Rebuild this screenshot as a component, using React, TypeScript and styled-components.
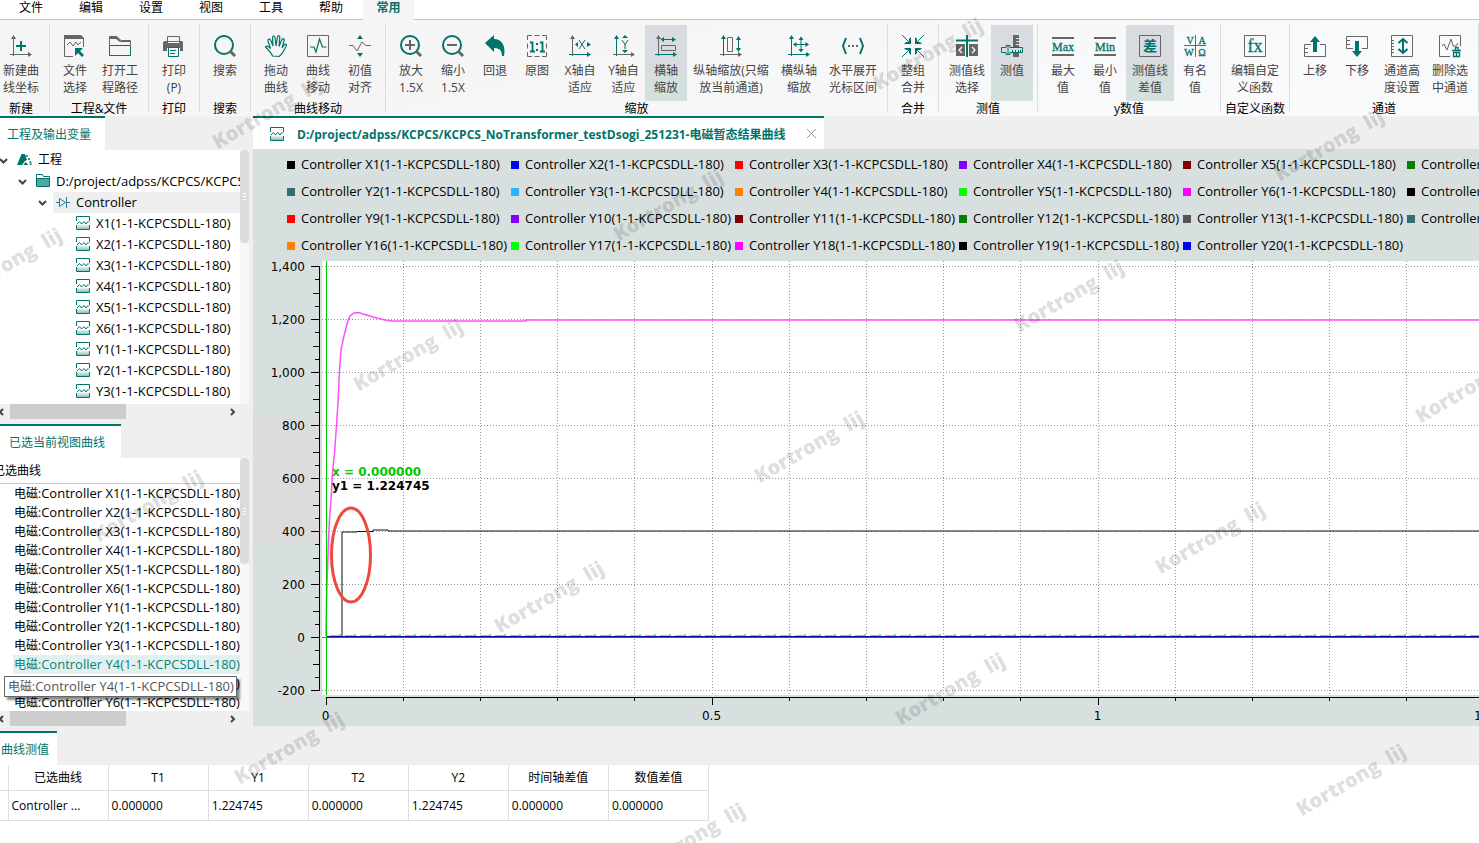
import React from "react";
import styled, { createGlobalStyle, css } from "styled-components";

const TEAL = "#00736a";
const GRAY = "#666666";
const UI_FONT = `"Open Sans", "Noto Sans CJK SC", sans-serif`;

const GlobalStyle = createGlobalStyle`
  *, *::before, *::after { box-sizing: border-box; }
  body { margin: 0; background: #fff; font: 12px/16px ${UI_FONT}; color: #000; }
  button { font: inherit; color: inherit; border: 0; padding: 0; background: none; cursor: pointer; }
  ul { list-style: none; margin: 0; padding: 0; }
`;

const Page = styled.div`
  position: relative;
  display: flex;
  flex-direction: column;
  min-height: 100vh;
  overflow: hidden;
  background: #fff;
`;

/* ---------- menu ---------- */
const MenuBar = styled.nav`
  display: flex;
  height: 20px;
  padding-left: 1px;
  border-bottom: 1px solid #b9c7d9;
  background: #fff;
`;
const MenuItem = styled.button<{ $active?: boolean }>`
  width: 60px;
  height: 19px;
  line-height: 16px;
  padding-bottom: 3px;
  ${(p) =>
    p.$active &&
    css`
      width: 51px;
      height: 20px;
      margin-left: 2px;
      padding-bottom: 4px;
      background: #f5f5f5;
      color: ${TEAL};
      font-weight: 700;
    `}
`;

/* ---------- ribbon ---------- */
const Ribbon = styled.header`
  display: flex;
  height: 96px;
  padding-top: 4px;
  background: linear-gradient(165deg, #f5f5f5 30%, #fafbfd 100%);
  overflow: hidden;
`;
const Group = styled.section<{ $cut?: boolean }>`
  flex: none;
  display: flex;
  flex-direction: column;
  align-items: center;
  height: 88px;
  margin-left: ${(p) => (p.$cut ? "-7px" : "0")};
  padding: 1px 4px 0;
  border-right: 1px solid #dcdcdc;
`;
const GroupTools = styled.div`
  display: flex;
`;
const GroupLabel = styled.h2`
  margin: 0;
  font-size: 12px;
  font-weight: 400;
  line-height: 16px;
  white-space: nowrap;
`;
const Tool = styled.button<{ $w: number; $on?: boolean }>`
  display: flex;
  flex-direction: column;
  align-items: center;
  width: ${(p) => p.$w}px;
  height: 76px;
  padding-top: 10px;
  color: #444;
  line-height: 17px;
  white-space: pre;
  background: ${(p) => (p.$on ? "linear-gradient(#d8dce1 60%, #d4e0de 70%)" : "none")};
`;
const ToolIcon = styled.svg`
  width: 22px;
  height: 22px;
  margin-bottom: 5px;
  fill: none;
  overflow: visible;
`;

const axes = (v: string, h: string) => (
  <>
    <path d="M3.5 3V21" stroke={v} />
    <path d="M1 4L3.5 0 6 4z" fill={v} />
    <path d="M0 19.5H19" stroke={h} />
    <path d="M18 17l4 2.5-4 2.5z" fill={h} />
  </>
);
const serif = (x: number, y: number, size: number, text: string) => (
  <text x={x} y={y} fontSize={size} fill={TEAL} stroke={TEAL} strokeWidth="0.3" textAnchor="middle" fontFamily='"Liberation Serif", serif'>
    {text}
  </text>
);

const icons: Record<string, React.ReactNode> = {
  axisNew: (
    <>
      {axes(GRAY, GRAY)}
      <path d="M11 6v10M6 11h10" stroke={TEAL} strokeWidth="2" />
    </>
  ),
  filePick: (
    <>
      <path d="M0 0h17l3 3v1H0z" fill={GRAY} />
      <path d="M.5 3v18.500H9M19.500 3v9" stroke={GRAY} />
      <path d="M3 10l3-3 3 4 3-4 2 3 3-3" stroke={GRAY} />
      <path d="M11 13h8l-3 3 4 4-2 2-4-4-3 3z" fill={TEAL} />
    </>
  ),
  folder: (
    <>
      <path d="M.5 10V1.500H8l4 4h9.500V10" stroke={GRAY} />
      <path d="M1 2h7l4 4h9v1H11L7 4H1z" fill={GRAY} />
      <path d="M.5 10.500h21v10H.5z" stroke={TEAL} />
    </>
  ),
  print: (
    <>
      <path d="M4.500 6V1.500h12V6" stroke={GRAY} />
      <path d="M2 6h17l1 1v9h-3v-3H4v3H0V7z" fill={GRAY} />
      <path d="M5 7.500h11" stroke="#fff" />
      <path d="M5.500 12.500h10v9h-10zM7 15.500h6M7 18.500h5" stroke={TEAL} />
    </>
  ),
  search: (
    <>
      <circle cx="10" cy="10" r="9" stroke={TEAL} strokeWidth="2" />
      <path d="M16 16l5 5" stroke={GRAY} strokeWidth="3" />
    </>
  ),
  hand: (
    <path
      d="M7.500 21c-1-3-4-6-7-9 1-2 3-.5 5 1.500L3 6c-.5-2 2-2.500 2.500-1L8 11 7.500 2.500c0-2 2.300-2 2.500 0L11 11l1.500-9c.5-2 2.600-1.500 2.300.5L14 11.500l3-7c1-1.500 2.700-.5 2.200 1L17 13l2.500-3.500c1-1 2.600 0 1.800 1.500L18 17c-1 2-2 3-4 4.500z"
      stroke={TEAL}
      strokeWidth="1.2"
    />
  ),
  curve: (
    <>
      <path d="M.5.5h21v21H.5z" stroke={GRAY} />
      <path d="M3 12h4l2 5 3.500-13 3 8h4" stroke={TEAL} strokeWidth="1.200" />
    </>
  ),
  initAlign: (
    <>
      <path d="M0 10.500h4l4 5.500 5-9 4 3.500h5" stroke={GRAY} />
      <path d="M8 4l3-4 3 4zM8 18l3 4 3-4z" fill={TEAL} />
    </>
  ),
  zoomIn: (
    <>
      <circle cx="10" cy="10" r="9" stroke={TEAL} strokeWidth="2" />
      <path d="M16 16l5 5" stroke={GRAY} strokeWidth="3" />
      <path d="M5 10h10M10 5v10" stroke={GRAY} strokeWidth="2" />
    </>
  ),
  zoomOut: (
    <>
      <circle cx="10" cy="10" r="9" stroke={TEAL} strokeWidth="2" />
      <path d="M16 16l5 5" stroke={GRAY} strokeWidth="3" />
      <path d="M5 10h10" stroke={GRAY} strokeWidth="2" />
    </>
  ),
  undo: <path d="M10 0v4c8 0 12 7 10 17h-2c0-6-3-8-8-8v4L1 8z" fill={TEAL} />,
  original: (
    <>
      <path d="M1.500 5V.5H6M8.500.5h5M16 .5h4.500V5M20.500 8.500v5M20.500 17v4.500H16M13.500 21.500h-5M6 21.500H1.500V17M1.500 13.500v-5" stroke={GRAY} />
      <path d="M4 7.500h2.500V17M14 7.500h2.500V17M4 16.500h5M14 16.500h5" stroke={TEAL} strokeWidth="1.800" />
      <path d="M10 8h2v2h-2zM10 14h2v2h-2z" fill={TEAL} />
    </>
  ),
  xFit: (
    <>
      {axes(GRAY, TEAL)}
      <path d="M10 5l6 9M16 5l-6 9" stroke={TEAL} />
      <path d="M9 7v5L6 9.500zM18 7v5l4-2.500z" fill={TEAL} />
    </>
  ),
  yFit: (
    <>
      {axes(TEAL, GRAY)}
      <path d="M9 5l3 4.500L15 5M12 9v5" stroke={TEAL} />
      <path d="M9 3l3-3 3 3zM9 15l3 3 3-3z" fill={TEAL} />
    </>
  ),
  hZoom: (
    <>
      {axes(GRAY, TEAL)}
      <path d="M6 4.500h14" stroke={TEAL} />
      <path d="M9 2v5L5.500 4.500zM17 2v5l4-2.500z" fill={TEAL} />
      <path d="M6.500 10.500h14v5h-14z" stroke={GRAY} />
    </>
  ),
  vZoom: (
    <>
      {axes(TEAL, GRAY)}
      <path d="M7.500 2.500h5v14h-5z" stroke={GRAY} />
      <path d="M18.500 3v12" stroke={TEAL} />
      <path d="M16 5l2.500-4L21 5zM16 13l2.500 4 2.500-4z" fill={TEAL} />
    </>
  ),
  hvZoom: (
    <>
      {axes(TEAL, TEAL)}
      <path d="M6 9.500h14M13 3v13" stroke={TEAL} />
      <path d="M10.500 5L13 1.500 15.500 5zM10.500 14l2.500 3.500 2.500-3.500zM8.500 7v5L5 9.500zM17.500 7v5L21 9.500z" fill={TEAL} />
    </>
  ),
  spread: (
    <>
      <path d="M4 3L1 11l3 8M18 3l3 8-3 8" stroke={TEAL} strokeWidth="2" />
      <path d="M6 10h2v2H6zM10 10h2v2h-2zM14 10h2v2h-2z" fill={GRAY} />
    </>
  ),
  merge: (
    <>
      <path d="M0 0l7 7M22 0l-7 7M0 22l7-7M22 22l-7-7" stroke={TEAL} />
      <path d="M9 2v7H2l2-2h3V4zM13 2v7h7l-2-2h-3V4zM9 20v-7H2l2 2h3v3zM13 20v-7h7l-2 2h-3v3z" fill={TEAL} />
    </>
  ),
  cursorPick: (
    <>
      <path d="M0 9h9v12H0zM13 9h9v12h-9z" fill={GRAY} />
      <path d="M6 12l-3 3 3 3M16 12l3 3-3 3" stroke="#fff" strokeWidth="1.300" />
      <path d="M0 5.500h22M11 0v22" stroke={TEAL} strokeWidth="2" />
    </>
  ),
  caliper: (
    <>
      <path d="M12 0h6v22h-6z" fill={GRAY} />
      <path d="M15 3.500h3M15 6.500h3M15 9.500h3" stroke="#ddd" />
      <path d="M.5 12.500H5v-2h4v2h12.500v5H9v2H5v-2H.5z" fill="#d8dce1" stroke={TEAL} />
      <path d="M11.500 15v2M14.500 15v2M17.500 15v2M7 11v8M19.500 15v2" stroke={TEAL} />
    </>
  ),
  max: (
    <>
      <path d="M0 3h22M0 20h22" stroke={GRAY} strokeWidth="2" />
      {serif(11, 16, 12, "Max")}
    </>
  ),
  min: (
    <>
      <path d="M0 3h22M0 20h22" stroke={GRAY} strokeWidth="2" />
      {serif(11, 16, 12, "Min")}
    </>
  ),
  diff: (
    <>
      <path d="M.5.5h21v21H.5z" stroke={GRAY} />
      <text x="11" y="16" fontSize="14" fontWeight="700" fill={TEAL} textAnchor="middle">
        差
      </text>
    </>
  ),
  units: (
    <>
      <path d="M11.500 0v22M0 10.500h22" stroke={GRAY} />
      {serif(6, 9, 10, "V")}
      {serif(18, 9, 10, "A")}
      {serif(5, 21, 10, "W")}
      {serif(18, 21, 10, "Ω")}
    </>
  ),
  fx: (
    <>
      <path d="M.5.5h21v21H.5z" stroke={GRAY} />
      {serif(11, 17, 18, "fx")}
    </>
  ),
  moveUp: (
    <>
      <path d="M7 9.500H.5v12h21v-12H16M1 13.500h3M1 17.500h3" stroke={GRAY} />
      <path d="M9 17V7H6l5-6 5 6h-3v10z" fill={TEAL} />
    </>
  ),
  moveDown: (
    <>
      <path d="M7 13.500H.5v-12h21v12H16M1 5.500h3M1 9.500h3" stroke={GRAY} />
      <path d="M9 6v10H6l5 6 5-6h-3V6z" fill={TEAL} />
    </>
  ),
  channelHeight: (
    <>
      <path d="M.5.5h21v21H.5zM1 5.500h2M1 8.500h2M1 11.500h2M1 14.500h2M1 17.500h2" stroke={GRAY} />
      <path d="M12 5v13M7.500 8L12 4l4.500 4M7.500 14l4.500 4 4.500-4" stroke={TEAL} strokeWidth="2" />
    </>
  ),
  channelDelete: (
    <>
      <path d="M11 21.500H.5V.5h21V11" stroke={GRAY} />
      <path d="M3 11l2-2 3 6 4-11 2 7h3l2-3" stroke={GRAY} />
      <path d="M13 15.500h9M14.500 17.500h6v4h-6zM16.500 15v-2.500h2.500V15M17.500 18v3" stroke={TEAL} strokeWidth="1.300" />
    </>
  ),
};

interface ToolDef {
  icon: string;
  text: string;
  w?: number;
  on?: boolean;
}
const groups: { label: string; tools: ToolDef[] }[] = [
  { label: "新建", tools: [{ icon: "axisNew", text: "新建曲\n线坐标", w: 48 }] },
  {
    label: "工程&文件",
    tools: [
      { icon: "filePick", text: "文件\n选择" },
      { icon: "folder", text: "打开工\n程路径", w: 48 },
    ],
  },
  { label: "打印", tools: [{ icon: "print", text: "打印\n(P)" }] },
  { label: "搜索", tools: [{ icon: "search", text: "搜索" }] },
  {
    label: "曲线移动",
    tools: [
      { icon: "hand", text: "拖动\n曲线" },
      { icon: "curve", text: "曲线\n移动" },
      { icon: "initAlign", text: "初值\n对齐" },
    ],
  },
  {
    label: "缩放",
    tools: [
      { icon: "zoomIn", text: "放大\n1.5X" },
      { icon: "zoomOut", text: "缩小\n1.5X" },
      { icon: "undo", text: "回退" },
      { icon: "original", text: "原图" },
      { icon: "xFit", text: "X轴自\n适应", w: 44 },
      { icon: "yFit", text: "Y轴自\n适应", w: 43 },
      { icon: "hZoom", text: "横轴\n缩放", on: true },
      { icon: "vZoom", text: "纵轴缩放(只缩\n放当前通道)", w: 88 },
      { icon: "hvZoom", text: "横纵轴\n缩放", w: 48 },
      { icon: "spread", text: "水平展开\n光标区间", w: 60 },
    ],
  },
  { label: "合并", tools: [{ icon: "merge", text: "整组\n合并" }] },
  {
    label: "测值",
    tools: [
      { icon: "cursorPick", text: "测值线\n选择", w: 48 },
      { icon: "caliper", text: "测值", on: true },
    ],
  },
  {
    label: "y数值",
    tools: [
      { icon: "max", text: "最大\n值" },
      { icon: "min", text: "最小\n值" },
      { icon: "diff", text: "测值线\n差值", w: 48, on: true },
      { icon: "units", text: "有名\n值" },
    ],
  },
  { label: "自定义函数", tools: [{ icon: "fx", text: "编辑自定\n义函数", w: 60 }] },
  {
    label: "通道",
    tools: [
      { icon: "moveUp", text: "上移" },
      { icon: "moveDown", text: "下移" },
      { icon: "channelHeight", text: "通道高\n度设置", w: 48 },
      { icon: "channelDelete", text: "删除选\n中通道", w: 48 },
    ],
  },
];

/* ---------- workspace ---------- */
const Workspace = styled.div`
  display: flex;
  background: #efefef;
`;
const Sidebar = styled.aside`
  flex: none;
  display: flex;
  flex-direction: column;
  gap: 5px;
  width: 253px;
`;
const Panel = styled.section`
  display: flex;
  flex-direction: column;
`;
const Tab = styled.button<{ $w: number }>`
  align-self: flex-start;
  width: ${(p) => p.$w}px;
  height: 34px;
  padding: 2px 7px 0 0;
  border-top: 2px solid ${TEAL};
  background: #fff;
  color: ${TEAL};
  white-space: nowrap;
`;
const PanelBody = styled.div`
  display: flex;
`;
const Viewport = styled.div<{ $h: number }>`
  width: 240px;
  height: ${(p) => p.$h}px;
  overflow: hidden;
  background: #fff;
`;
const VScroll = styled.div`
  width: 9px;
  background: #f7f7f7;
`;
const VThumb = styled.div<{ $h: number }>`
  display: flex;
  flex-direction: column;
  align-items: center;
  justify-content: center;
  gap: 2px;
  height: ${(p) => p.$h}px;
  border-radius: 4px;
  background: #dcdcdc;
`;
const Grip = styled.i`
  width: 3px;
  height: 1px;
  background: #fff;
`;
const HScroll = styled.div`
  display: flex;
  align-items: center;
  justify-content: space-between;
  width: 240px;
  height: 15px;
  padding-right: 4px;
`;
const HThumb = styled.div`
  width: 116px;
  height: 15px;
  margin-left: 4px;
  margin-right: auto;
  background: #cdcdcd;
`;
const Chevron = styled.svg`
  flex: none;
  fill: none;
  stroke: #444;
  stroke-width: 2;
`;
const TreeRow = styled.li<{ $indent: number }>`
  display: flex;
  align-items: center;
  height: 21px;
  margin-left: ${(p) => p.$indent}px;
  white-space: nowrap;
`;
const TreeLabel = styled.button<{ $selected?: boolean; $latin?: boolean }>`
  display: flex;
  align-items: center;
  gap: 6px;
  flex: 1;
  height: 21px;
  padding: 0 0 2px 3px;
  text-align: left;
  font-size: ${(p) => (p.$latin ? 13 : 12)}px;
  background: ${(p) => (p.$selected ? "#efefef" : "none")};
`;
const Expander = styled(Chevron)`
  margin-right: 6px;
`;
const ListHead = styled.div`
  height: 26px;
  padding-top: 5px;
  border-bottom: 1px solid #c8c8c8;
  margin-left: -7px;
`;
const ListRow = styled.li<{ $hot?: boolean }>`
  height: 19px;
  margin-left: 13px;
  padding-left: 1px;
  line-height: 19px;
  white-space: nowrap;
  background: ${(p) => (p.$hot ? "#e2f1f0" : "none")};
  color: ${(p) => (p.$hot ? "#0a8077" : "#000")};
`;
const ListWrap = styled.div`
  position: relative;
`;
const Tooltip = styled.div`
  position: absolute;
  z-index: 2;
  left: 4px;
  top: 218px;
  width: 233px;
  height: 21px;
  padding-left: 3px;
  border: 1px solid #666;
  background: #fff;
  box-shadow: 3px 3px 2px rgba(0, 0, 0, 0.45);
  color: #555;
  line-height: 19px;
  white-space: nowrap;
`;
const Latin = styled.span`
  font-size: 13px;
`;

const WaveIcon = () => (
  <svg width="14" height="14" viewBox="0 0 14 14" fill="none" aria-hidden="true">
    <defs>
      <linearGradient id="waveFill" x1="0" y1="0" x2="0" y2="1">
        <stop offset="0" stopColor="#fff" />
        <stop offset="1" stopColor="#8fc0ba" />
      </linearGradient>
    </defs>
    <path d="M1 8h12v5H1z" fill="url(#waveFill)" />
    <path d="M.5 5V.5h13V5M.5 9v4.500h13V9" stroke={TEAL} />
    <path d="M1 8l2.500-2.500 2 2.500L8 5.500 10 8l2-2.500 1 1" stroke={TEAL} />
  </svg>
);
const ProjectIcon = () => (
  <svg width="15" height="11" viewBox="0 0 15 11" aria-hidden="true">
    <path d="M0 11L4.500 0H8l2 6-2 1-3 4zM6.500 11l2-3 3 3z" fill={TEAL} />
    <path d="M9 1h2v2H9zM11 4h2v2h-2zM12 7h2l1 4h-2z" fill="#3b9b92" />
  </svg>
);
const FolderIcon = () => (
  <svg width="14" height="13" viewBox="0 0 14 13" aria-hidden="true">
    <path d="M.5 12.500V.5h6l1 2h6v10z" fill="#fff" stroke={TEAL} />
    <path d="M1 5h12v7H1z" fill="#56a59e" />
    <path d="M1 4.500h12" stroke={TEAL} />
  </svg>
);
const DiodeIcon = () => (
  <svg width="14" height="12" viewBox="0 0 14 12" fill="none" stroke="#1e7f96" aria-hidden="true">
    <path d="M0 6.500h3M3.500 2.500v8L9.500 6.500zM10.500 1v11M10 6.500h4" />
  </svg>
);
const Down = () => (
  <Expander width="9" height="6" viewBox="0 0 9 6">
    <path d="M1 1l3.500 3.500L8 1" />
  </Expander>
);

const suffix = "(1-1-KCPCSDLL-180)";
const treeNames = ["X1", "X2", "X3", "X4", "X5", "X6", "Y1", "Y2", "Y3"];
const listNames = ["X1", "X2", "X3", "X4", "X5", "X6", "Y1", "Y2", "Y3", "Y4", "Y5", "Y6"];

const ScrollRow = () => (
  <HScroll>
    <Chevron width="6" height="8" viewBox="2 0 6 8">
      <path d="M5 1L2 4l3 3" />
    </Chevron>
    <HThumb />
    <Chevron width="6" height="8" viewBox="0 0 6 8">
      <path d="M1 1l3 3-3 3" />
    </Chevron>
  </HScroll>
);

/* ---------- document ---------- */
const Document = styled.main`
  flex: 1;
  min-width: 0;
  display: flex;
  flex-direction: column;
`;
const DocTab = styled.div`
  align-self: flex-start;
  display: flex;
  align-items: center;
  width: 571px;
  height: 33px;
  padding: 0 8px 0 17px;
  border-top: 2px solid ${TEAL};
  background: #fff;
`;
const DocTitle = styled.h1`
  flex: 1;
  margin: 0 0 0 13px;
  padding-top: 2px;
  font-size: 12px;
  font-weight: 700;
  color: ${TEAL};
  white-space: nowrap;
`;
const CloseButton = styled.button`
  display: flex;
`;
const ChartArea = styled.div`
  background: #d8e0df;
  overflow: hidden;
`;
const Legend = styled.ul`
  display: grid;
  grid-template-columns: repeat(6, 224px);
  grid-auto-rows: 27px;
  height: 112px;
  padding: 2px 0 2px 34px;
`;
const LegendItem = styled.li`
  display: flex;
  align-items: center;
  gap: 6px;
  padding-bottom: 2px;
  font-size: 13px;
  white-space: nowrap;
`;
const Swatch = styled.i<{ $c: string }>`
  width: 8px;
  height: 8px;
  margin-top: 2px;
  background: ${(p) => p.$c};
`;
const Plot = styled.svg`
  display: block;
  width: 100%;
  height: 465px;
  font: 12px "DejaVu Sans", sans-serif;
`;

const legend: [string, string][] = [
  ["X1", "#000"], ["X2", "#00f"], ["X3", "#f00"], ["X4", "#8000ff"], ["X5", "#800000"], ["X6", "#008000"],
  ["Y2", "#366e6e"], ["Y3", "#26b5ff"], ["Y4", "#ff8000"], ["Y5", "#0f0"], ["Y6", "#f0f"], ["Y7", "#000"],
  ["Y9", "#f00"], ["Y10", "#8000ff"], ["Y11", "#800000"], ["Y12", "#008000"], ["Y13", "#555"], ["Y14", "#366e6e"],
  ["Y16", "#ff8000"], ["Y17", "#0f0"], ["Y18", "#f0f"], ["Y19", "#000"], ["Y20", "#00f"],
];

const X0 = 73.5;
const Y0 = 376.5;
const xOf = (t: number) => X0 + t * 772;
const yOf = (v: number) => Y0 - v * 0.265;
const snap = (n: number) => Math.floor(n) + 0.5;
const yMajor = [1400, 1200, 1000, 800, 600, 400, 200, 0, -200];
const yMinor = Array.from({ length: 32 }, (_, i) => 1400 - i * 50).filter((v) => v % 200 !== 0);
const xSteps = Array.from({ length: 30 }, (_, i) => i + 1);

const Chart = () => (
  <Plot role="img" aria-label="曲线">
    <rect x="0" y="157" width="69" height="126" fill="#dcdcdc" />
    <rect x="69" y="0" width="100%" height="434" fill="#fff" />
    <g stroke="#999" strokeDasharray="1 2">
      {yMajor.map((v) => (
        <line key={v} x1="69" x2="100%" y1={yOf(v)} y2={yOf(v)} />
      ))}
      {xSteps.map((i) => (
        <line key={i} y1="0" y2="434" x1={snap(xOf(i / 10) - 0.5)} x2={snap(xOf(i / 10) - 0.5)} />
      ))}
    </g>
    <g stroke="#000">
      <path d="M66.500 5V430" />
      {yMajor.map((v) => (
        <line key={v} x1="58" x2="67" y1={yOf(v)} y2={yOf(v)} />
      ))}
      {yMinor.map((v) => (
        <line key={v} x1={v % 100 === 0 ? 60 : 62} x2="67" y1={snap(yOf(v))} y2={snap(yOf(v))} />
      ))}
      <line x1="73" x2="100%" y1="436.5" y2="436.5" />
      <line x1="73.5" x2="73.5" y1="436" y2="444" />
      {xSteps.map((i) => (
        <line key={i} x1={snap(xOf(i / 10) - 0.5)} x2={snap(xOf(i / 10) - 0.5)} y1="436" y2={i % 5 === 0 ? 444 : 440} />
      ))}
    </g>
    <g textAnchor="end">
      {yMajor.map((v) => (
        <text key={v} x="52" y={yOf(v) + 4}>
          {v.toLocaleString("en-US")}
        </text>
      ))}
    </g>
    <g textAnchor="middle">
      {[0, 0.5, 1, 1.5].map((t) => (
        <text key={t} x={xOf(t) - 1} y="459">
          {t}
        </text>
      ))}
    </g>
    <g fill="none">
      <path
        d="M73 375L73.500 339 74.500 309 75.500 279 76.500 259 78 239 79.500 212 81.500 192 83.500 164 85 142 86.500 109 88 89 90.500 77 94.500 61 97 55 101 52 105.500 51.500 110 53 120 56 132 59 139 60H273V59H4000"
        stroke="#ff4dff"
        strokeWidth="1.500"
      />
      <path d="M89 375V271H104V270.500H120V269H135V270H4000" stroke="#111" strokeWidth="1" />
      <path d="M77 374.500H4000" stroke="#6be878" strokeDasharray="11 4" />
      <path d="M86 373.500H4000" stroke="#6be878" strokeDasharray="2 13" />
      <path d="M69 376.500H4000" stroke="#00c800" />
      <path d="M73 376.500H4000" stroke="#0a7a4a" />
      <path d="M73 375.500H4000" stroke="#0a0aa8" />
      <path d="M73.500 0V434" stroke="#00c800" />
      <ellipse cx="98" cy="294" rx="19.500" ry="47" stroke="#ee4a3d" strokeWidth="3" />
    </g>
    <g fontWeight="700">
      <text x="79" y="215" fill="#00c800">
        x = 0.000000
      </text>
      <text x="79" y="229">y1 = 1.224745</text>
    </g>
  </Plot>
);

/* ---------- measurements ---------- */
const Measure = styled.section`
  display: flex;
  flex-direction: column;
  padding-top: 5px;
  background: #efefef;
`;
const TableWrap = styled.div`
  background: #fff;
`;
const DataTable = styled.table`
  width: 709px;
  border-collapse: collapse;
  table-layout: fixed;
  th, td {
    padding: 1px 3px 0;
    border: 1px solid #dedede;
    border-top: 0;
    font-weight: 400;
    white-space: nowrap;
  }
  th:first-child, td:first-child { width: 8px; border-left: 0; padding: 0; }
  th { height: 25px; }
  td { height: 30px; text-align: left; }
`;

/* ---------- watermark ---------- */
const Watermarks = styled.div`
  position: absolute;
  inset: 0;
  z-index: 5;
  overflow: hidden;
  pointer-events: none;
`;
const Mark = styled.span<{ $x: number; $y: number }>`
  position: absolute;
  left: ${(p) => p.$x}px;
  top: ${(p) => p.$y}px;
  transform: translate(-50%, -50%) rotate(-30deg);
  font: 800 20px/24px "Open Sans", sans-serif;
  color: rgba(0, 0, 0, 0.15);
  white-space: pre;
`;
const marks: [number, number][] = [
  [928, 54], [1069, 296], [1210, 538], [1351, 780],
  [1329, 145], [1470, 387],
  [668, 205], [809, 447], [950, 689],
  [267, 113], [408, 355], [549, 597], [690, 839],
  [7, 264], [148, 506], [289, 748],
];

export default function App() {
  return (
    <Page>
      <GlobalStyle />
      <MenuBar>
        {["文件", "编辑", "设置", "视图", "工具", "帮助"].map((m) => (
          <MenuItem key={m}>{m}</MenuItem>
        ))}
        <MenuItem $active>常用</MenuItem>
      </MenuBar>
      <Ribbon>
        {groups.map((g, i) => (
          <Group key={g.label} $cut={i === 0}>
            <GroupTools>
              {g.tools.map((t) => (
                <Tool key={t.icon} $w={t.w ?? 42} $on={t.on}>
                  <ToolIcon viewBox="0 0 22 22" aria-hidden="true">
                    {icons[t.icon]}
                  </ToolIcon>
                  {t.text}
                </Tool>
              ))}
            </GroupTools>
            <GroupLabel>{g.label}</GroupLabel>
          </Group>
        ))}
      </Ribbon>
      <Workspace>
        <Sidebar>
          <Panel>
            <Tab $w={105}>工程及输出变量</Tab>
            <PanelBody>
              <Viewport $h={254}>
                <ul>
                  <TreeRow $indent={-1}>
                    <Down />
                    <TreeLabel>
                      <ProjectIcon />
                      工程
                    </TreeLabel>
                  </TreeRow>
                  <TreeRow $indent={18}>
                    <Down />
                    <TreeLabel $latin>
                      <FolderIcon />
                      D:/project/adpss/KCPCS/KCPCS
                    </TreeLabel>
                  </TreeRow>
                  <TreeRow $indent={38}>
                    <Down />
                    <TreeLabel $latin $selected>
                      <DiodeIcon />
                      Controller
                    </TreeLabel>
                  </TreeRow>
                  {treeNames.map((n) => (
                    <TreeRow key={n} $indent={73}>
                      <TreeLabel $latin>
                        <WaveIcon />
                        {n + suffix}
                      </TreeLabel>
                    </TreeRow>
                  ))}
                </ul>
              </Viewport>
              <VScroll>
                <VThumb $h={93}>
                  <Grip />
                  <Grip />
                  <Grip />
                </VThumb>
              </VScroll>
            </PanelBody>
            <ScrollRow />
          </Panel>
          <Panel>
            <Tab $w={121}>已选当前视图曲线</Tab>
            <ListWrap>
              <PanelBody>
                <Viewport $h={253}>
                  <ListHead>已选曲线</ListHead>
                  <ul>
                    {listNames.map((n) => (
                      <ListRow key={n} $hot={n === "Y4"}>
                        电磁:<Latin>Controller {n + suffix}</Latin>
                      </ListRow>
                    ))}
                  </ul>
                </Viewport>
                <VScroll>
                  <VThumb $h={106}>
                    <Grip />
                    <Grip />
                    <Grip />
                  </VThumb>
                </VScroll>
              </PanelBody>
              <Tooltip role="tooltip">
                电磁:<Latin>Controller Y4{suffix}</Latin>
              </Tooltip>
            </ListWrap>
            <ScrollRow />
          </Panel>
        </Sidebar>
        <Document>
          <DocTab>
            <WaveIcon />
            <DocTitle>D:/project/adpss/KCPCS/KCPCS_NoTransformer_testDsogi_251231-电磁暂态结果曲线</DocTitle>
            <CloseButton aria-label="关闭">
              <svg width="9" height="9" viewBox="0 0 9 9" stroke="#999" aria-hidden="true">
                <path d="M0 0l9 9M9 0L0 9" />
              </svg>
            </CloseButton>
          </DocTab>
          <ChartArea>
            <Legend>
              {legend.map(([n, c]) => (
                <LegendItem key={n}>
                  <Swatch $c={c} />
                  Controller {n + suffix}
                </LegendItem>
              ))}
            </Legend>
            <Chart />
          </ChartArea>
        </Document>
      </Workspace>
      <Measure>
        <Tab $w={57}>曲线测值</Tab>
        <TableWrap>
          <DataTable>
            <thead>
              <tr>
                <th />
                {["已选曲线", "T1", "Y1", "T2", "Y2", "时间轴差值", "数值差值"].map((h) => (
                  <th key={h} scope="col">{h}</th>
                ))}
              </tr>
            </thead>
            <tbody>
              <tr>
                <td />
                {["Controller ...", "0.000000", "1.224745", "0.000000", "1.224745", "0.000000", "0.000000"].map((v, i) => (
                  <td key={i}>{v}</td>
                ))}
              </tr>
            </tbody>
          </DataTable>
        </TableWrap>
      </Measure>
      <Watermarks aria-hidden="true">
        {marks.map(([x, y]) => (
          <Mark key={`${x}-${y}`} $x={x} $y={y}>
            {"Kortrong  lij"}
          </Mark>
        ))}
      </Watermarks>
    </Page>
  );
}
